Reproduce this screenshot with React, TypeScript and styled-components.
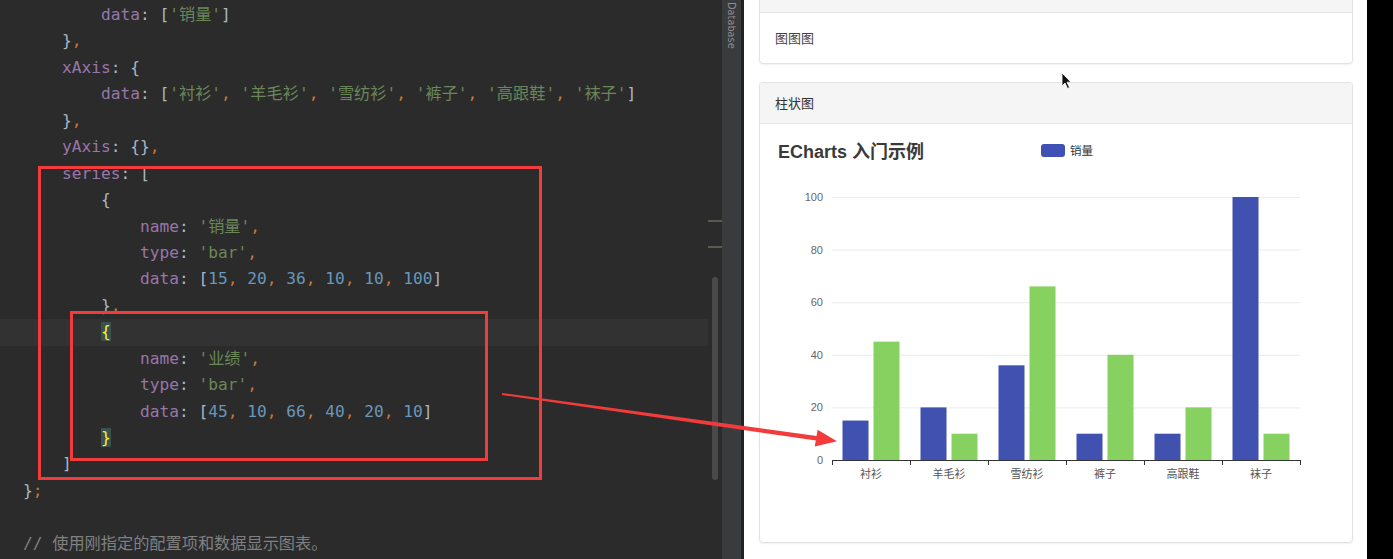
import React from "react";
import styled, { createGlobalStyle } from "styled-components";

const Global = createGlobalStyle`
  html, body { margin: 0; padding: 0; background: #2b2b2b; overflow: hidden; }
  #root { width: 1393px; height: 559px; }
`;

const Page = styled.div`
  position: relative;
  display: flex;
  width: 1393px;
  height: 559px;
  overflow: hidden;
`;

const Editor = styled.div`
  display: flex;
  width: 722px;
  height: 100%;
  background: #2b2b2b;
`;

const CodeArea = styled.div`
  flex: 1;
  padding-top: 2px;
  font-family: "DejaVu Sans Mono", "Noto Sans CJK SC", monospace;
  font-size: 16.2px;
  color: #a9b7c6;
`;

const Line = styled.div<{ $current?: boolean }>`
  height: 26.45px;
  line-height: 26.45px;
  padding-left: 23px;
  white-space: pre;
  background: ${(p) => (p.$current ? "#323232" : "transparent")};
`;

const colors: Record<string, string> = {
  key: "#9876aa",
  str: "#6a8759",
  num: "#6897bb",
  comma: "#cc7832",
  punc: "#a9b7c6",
  comment: "#808080",
  brace: "#ffef28",
};

const Tok = styled.span<{ $kind: string }>`
  color: ${(p) => colors[p.$kind]};
  ${(p) => (p.$kind === "brace" ? "background: #3b514d;" : "")}
`;

const ScrollTrack = styled.div`
  position: relative;
  width: 14px;
  height: 100%;
`;

const Marker = styled.div<{ $top: number }>`
  position: absolute;
  left: 0;
  right: 0;
  top: ${(p) => p.$top}px;
  height: 2px;
  background: #5c5a48;
`;

const Thumb = styled.div`
  position: absolute;
  left: 4px;
  width: 6px;
  top: 277px;
  height: 203px;
  border-radius: 3px;
  background: #494949;
`;

const ToolStrip = styled.div`
  width: 19px;
  height: 100%;
  background: #393b3d;
  display: flex;
  justify-content: center;
`;

const StripLabel = styled.span`
  writing-mode: vertical-rl;
  font-family: "DejaVu Sans", sans-serif;
  font-size: 9.8px;
  color: #8e8e8e;
  padding-top: 2px;
`;

const Divider = styled.div`
  width: 3px;
  height: 100%;
  background: #222;
`;

const Browser = styled.div`
  width: 623px;
  height: 100%;
  background: #fff;
  box-sizing: border-box;
  padding: 0 14px 0 15px;
  display: flex;
  flex-direction: column;
  gap: 18px;
  font-family: "Noto Sans CJK SC", "Liberation Sans", sans-serif;
`;

const Black = styled.div`
  flex: 1;
  background: #000;
`;

const Card = styled.div<{ $cut?: boolean }>`
  border: 1px solid #e3e3e3;
  border-radius: 4px;
  background: #fff;
  box-shadow: 0 1px 2px rgba(0, 0, 0, 0.06);
  margin-top: ${(p) => (p.$cut ? "-29px" : "0")};
  overflow: hidden;
`;

const CardHeader = styled.div`
  height: 40px;
  line-height: 40px;
  padding: 0 15px;
  background: #f5f5f5;
  border-bottom: 1px solid #e6e6e6;
  font-size: 13px;
  color: #333;
`;

const CardBody = styled.div`
  padding: 15px;
  line-height: 20px;
  font-size: 13px;
  color: #444;
`;

const ChartBody = styled.div`
  height: 418px;
`;

const Overlay = styled.svg`
  position: absolute;
  left: 0;
  top: 0;
  pointer-events: none;
`;

type T = [string, string];
const k = (t: string): T => ["key", t];
const s = (t: string): T => ["str", t];
const n = (t: string): T => ["num", t];
const c = (t: string): T => ["comma", t];
const p = (t: string): T => ["punc", t];

const nums = (arr: number[]): T[] => {
  const out: T[] = [p("[")];
  arr.forEach((v, i) => {
    out.push(n(String(v)));
    if (i < arr.length - 1) out.push(c(", "));
  });
  out.push(p("]"));
  return out;
};

const strs = (arr: string[]): T[] => {
  const out: T[] = [p("[")];
  arr.forEach((v, i) => {
    out.push(s(`'${v}'`));
    if (i < arr.length - 1) out.push(c(", "));
  });
  out.push(p("]"));
  return out;
};

const lines: { indent: number; toks: T[]; current?: boolean }[] = [
  { indent: 8, toks: [k("data"), p(": "), ...strs(["销量"])] },
  { indent: 4, toks: [p("}"), c(",")] },
  { indent: 4, toks: [k("xAxis"), p(": {")] },
  { indent: 8, toks: [k("data"), p(": "), ...strs(["衬衫", "羊毛衫", "雪纺衫", "裤子", "高跟鞋", "袜子"])] },
  { indent: 4, toks: [p("}"), c(",")] },
  { indent: 4, toks: [k("yAxis"), p(": {}"), c(",")] },
  { indent: 4, toks: [k("series"), p(": [")] },
  { indent: 8, toks: [p("{")] },
  { indent: 12, toks: [k("name"), p(": "), s("'销量'"), c(",")] },
  { indent: 12, toks: [k("type"), p(": "), s("'bar'"), c(",")] },
  { indent: 12, toks: [k("data"), p(": "), ...nums([15, 20, 36, 10, 10, 100])] },
  { indent: 8, toks: [p("}"), c(",")] },
  { indent: 8, toks: [["brace", "{"]], current: true },
  { indent: 12, toks: [k("name"), p(": "), s("'业绩'"), c(",")] },
  { indent: 12, toks: [k("type"), p(": "), s("'bar'"), c(",")] },
  { indent: 12, toks: [k("data"), p(": "), ...nums([45, 10, 66, 40, 20, 10])] },
  { indent: 8, toks: [["brace", "}"]] },
  { indent: 4, toks: [p("]")] },
  { indent: 0, toks: [p("}"), c(";")] },
  { indent: 0, toks: [] },
  { indent: 0, toks: [["comment", "// 使用刚指定的配置项和数据显示图表。"]] },
];

const categories = ["衬衫", "羊毛衫", "雪纺衫", "裤子", "高跟鞋", "袜子"];
const sales = [15, 20, 36, 10, 10, 100];
const perf = [45, 10, 66, 40, 20, 10];

const G = { left: 72, right: 540, top: 73, bottom: 336 };
const unit = (G.bottom - G.top) / 100;
const catW = (G.right - G.left) / 6;

const Chart: React.FC = () => (
  <svg width="592" height="418" viewBox="0 0 592 418">
    <text x="18" y="34" fontSize="18" fontWeight="bold" fill="#3a3a3a" fontFamily='"Liberation Sans", "Noto Sans CJK SC", sans-serif'>
      ECharts 入门示例
    </text>
    <rect x="281" y="20" width="24" height="13" rx="3" fill="#3f51b5" />
    <text x="310" y="30.5" fontSize="11.5" fill="#333" fontFamily='"Noto Sans CJK SC", sans-serif'>
      销量
    </text>
    {[0, 20, 40, 60, 80, 100].map((v) => {
      const y = G.bottom - v * unit;
      return (
        <g key={v}>
          {v > 0 && <line x1={G.left} x2={G.right} y1={y + 0.5} y2={y + 0.5} stroke="#ececec" strokeWidth="1" />}
          <text x="63" y={y + 4} fontSize="11" fill="#666" textAnchor="end" fontFamily='"Liberation Sans", sans-serif'>
            {v}
          </text>
        </g>
      );
    })}
    {categories.map((cat, i) => {
      const cx = G.left + catW * i + catW / 2;
      const hb = sales[i] * unit;
      const hg = perf[i] * unit;
      return (
        <g key={cat}>
          <rect x={cx - 28.5} y={G.bottom - hb} width="26" height={hb} fill="#4051b0" />
          <rect x={cx + 2.5} y={G.bottom - hg} width="26" height={hg} fill="#86d160" />
          <text x={cx} y="353.5" fontSize="11" fill="#555" textAnchor="middle" fontFamily='"Noto Sans CJK SC", sans-serif'>
            {cat}
          </text>
        </g>
      );
    })}
    <line x1={G.left} x2={G.right} y1={G.bottom + 0.5} y2={G.bottom + 0.5} stroke="#333" strokeWidth="1" />
    {Array.from({ length: 7 }).map((_, i) => {
      const x = Math.round(G.left + catW * i) + 0.5;
      return <line key={i} x1={x} x2={x} y1={G.bottom} y2={G.bottom + 5} stroke="#333" strokeWidth="1" />;
    })}
  </svg>
);

export default function App() {
  return (
    <>
      <Global />
      <Page>
        <Editor>
          <CodeArea>
            {lines.map((l, i) => (
              <Line key={i} $current={l.current}>
                {" ".repeat(l.indent)}
                {l.toks.map(([kind, text], j) => (
                  <Tok key={j} $kind={kind}>
                    {text}
                  </Tok>
                ))}
              </Line>
            ))}
          </CodeArea>
          <ScrollTrack>
            <Marker $top={220} />
            <Marker $top={246} />
            <Thumb />
          </ScrollTrack>
        </Editor>
        <ToolStrip>
          <StripLabel>Database</StripLabel>
        </ToolStrip>
        <Divider />
        <Browser>
          <Card $cut>
            <CardHeader />
            <CardBody>图图图</CardBody>
          </Card>
          <Card>
            <CardHeader>柱状图</CardHeader>
            <ChartBody>
              <Chart />
            </ChartBody>
          </Card>
        </Browser>
        <Black />
        <Overlay width="1393" height="559" viewBox="0 0 1393 559">
          <rect x="39.5" y="167.5" width="501" height="311" fill="none" stroke="#f23b3b" strokeWidth="3" />
          <rect x="71.5" y="312.5" width="415" height="147" fill="none" stroke="#f23b3b" strokeWidth="3" />
          <polygon points="502,393 818.4,436.3 817.8,440.8 502,395" fill="#f23b3b" />
          <polygon points="837,441.2 814.8,446.6 817.6,429.8" fill="#f23b3b" />
          <path d="M1062 73 L1062 86 L1065 83 L1067.5 88.5 L1069.5 87.5 L1067 82.2 L1071 82.2 Z" fill="#111" stroke="#fff" strokeWidth="0.8" />
        </Overlay>
      </Page>
    </>
  );
}
